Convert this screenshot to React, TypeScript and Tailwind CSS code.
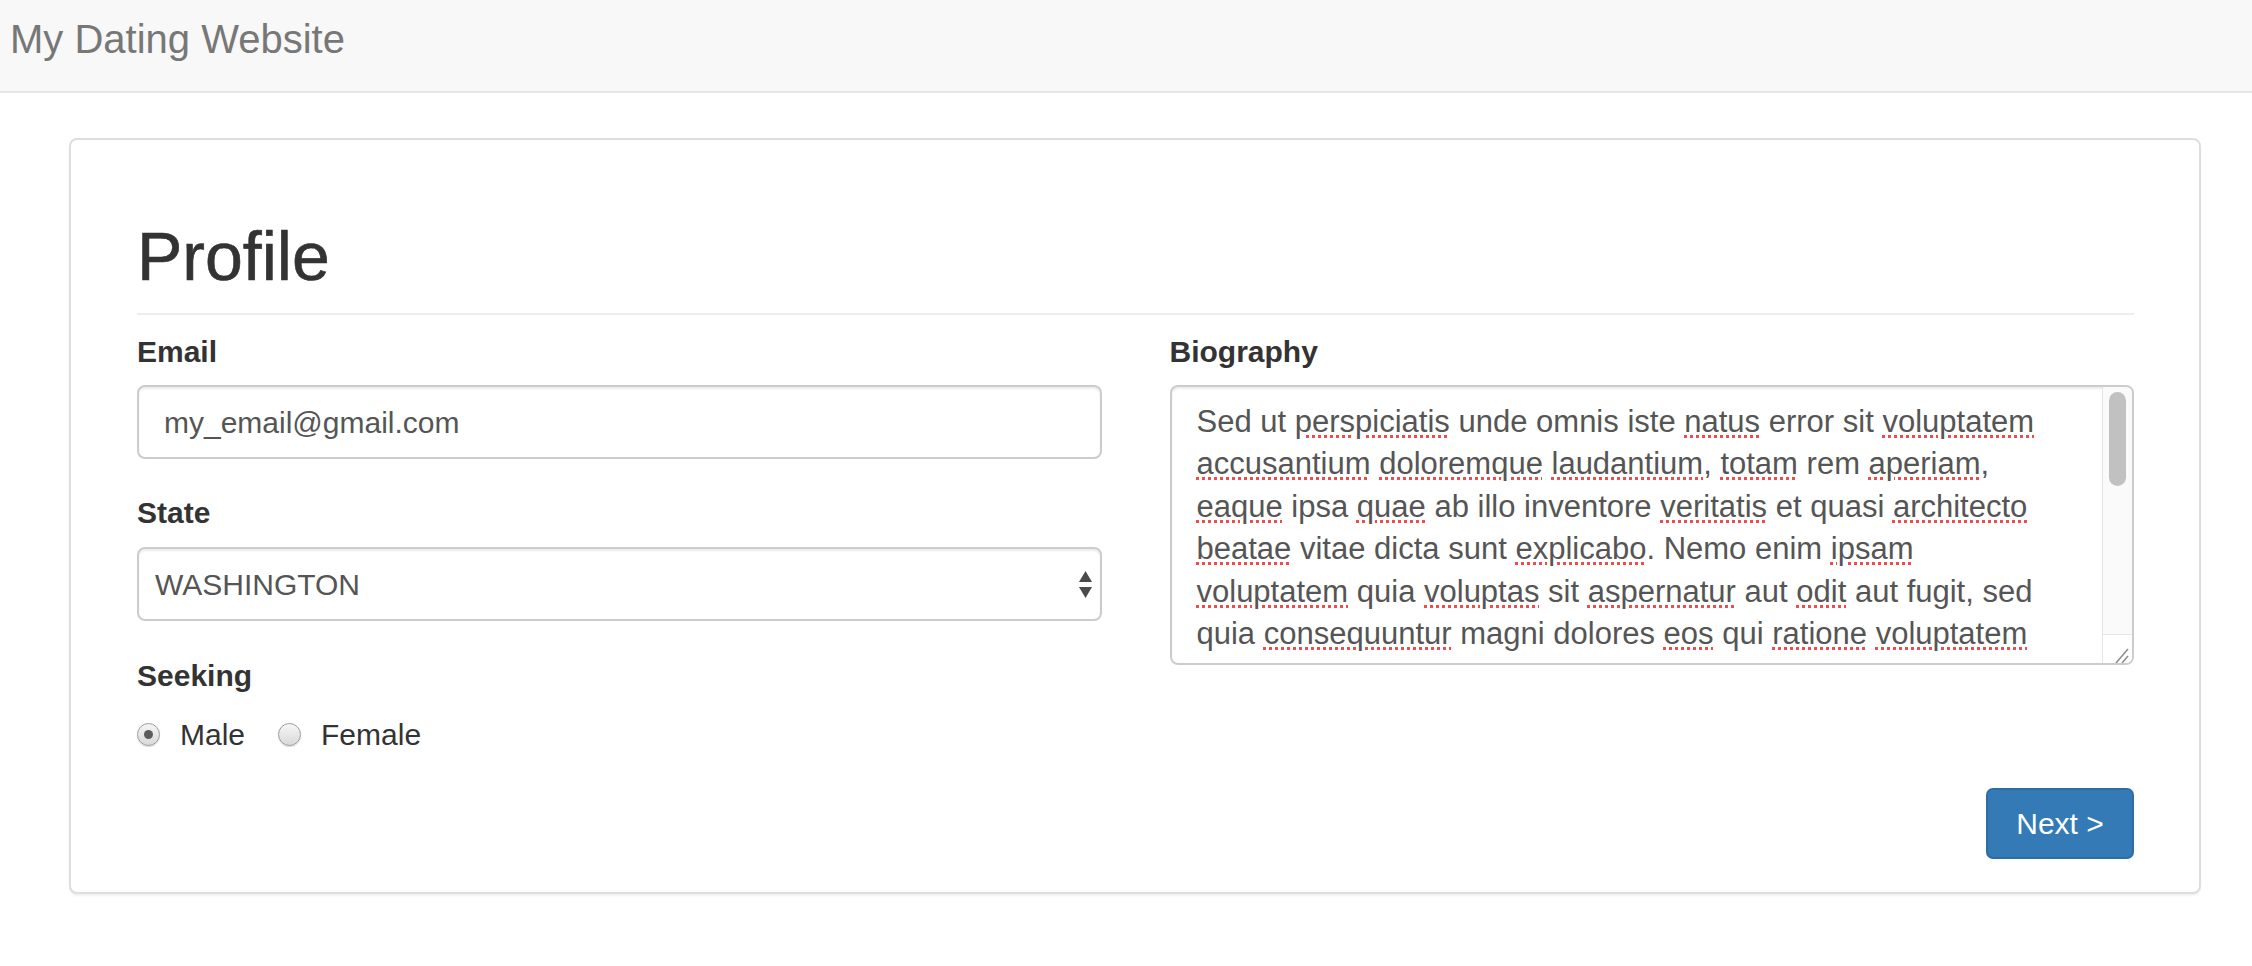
import React from "react";

const bio: string[] = [
  "Sed ut *perspiciatis* unde omnis iste *natus* error sit *voluptatem*",
  "*accusantium* *doloremque* *laudantium*, *totam* rem *aperiam*,",
  "*eaque* ipsa *quae* ab illo inventore *veritatis* et quasi *architecto*",
  "*beatae* vitae dicta sunt *explicabo*. Nemo enim *ipsam*",
  "*voluptatem* quia *voluptas* sit *aspernatur* aut *odit* aut fugit, sed",
  "quia *consequuntur* magni dolores *eos* qui *ratione* *voluptatem*",
  "sequi *nesciunt*. Neque porro *quisquam* est, qui *dolorem* ipsum quia",
];

function BioLine({ text }: { text: string }) {
  const parts = text.split(" ");
  return (
    <div className="whitespace-nowrap">
      {parts.map((p, i) => {
        const m = p.match(/^\*(.+)\*(.*)$/);
        return (
          <span key={i}>
            {i > 0 && " "}
            {m ? (
              <>
                <span className="underline decoration-dotted decoration-[#f24b4b] decoration-3 underline-offset-[3px]">{m[1]}</span>
                {m[2]}
              </>
            ) : (
              p
            )}
          </span>
        );
      })}
    </div>
  );
}

function Radio({ checked, label }: { checked?: boolean; label: string }) {
  return (
    <div className="flex items-center">
      <div className="w-[23px] h-[23px] rounded-full border border-[#9c9c9c] bg-linear-to-b from-[#f6f6f6] to-[#d9d9d9] shadow-[0_1px_1px_rgba(0,0,0,0.15)] flex items-center justify-center">
        {checked && <div className="w-[9px] h-[9px] rounded-full bg-[#5c5c5c]" />}
      </div>
      <span className="ml-[20px]">{label}</span>
    </div>
  );
}

const labelCls = "block text-[30px] font-bold leading-[42px] text-[#333]";
const fieldCls =
  "h-[74px] rounded-[8px] border-2 border-[#ccc] bg-white shadow-[inset_0_2px_2px_rgba(0,0,0,0.075)] flex items-center text-[30px] text-[#555]";

export default function App() {
  return (
    <div className="min-h-screen bg-white font-['Liberation_Sans',Arial,sans-serif]">
      {/* ── Navbar ── */}
      <nav className="h-[93px] border-b-2 border-[#e7e7e7] bg-[#f8f8f8] pl-[10px] pt-[19px]">
        <div className="text-[40px] leading-none text-[#777]">My Dating Website</div>
      </nav>

      <main className="pt-[45px]">
        <div className="ml-[69px] w-[2132px] rounded-[8px] border-2 border-[#ddd] bg-white shadow-[0_2px_2px_rgba(0,0,0,0.05)] pl-[66px] pr-[65px] pt-[80px] pb-[33px]">
          <h1 className="text-[68px] leading-[72px] font-normal text-[#333] [-webkit-text-stroke:0.6px_#333]">Profile</h1>
          <div className="mt-[21px] h-[2px] bg-[#eee]" />

          <div className="mt-[16px] grid grid-cols-2 gap-x-[68px]">
            {/* left column */}
            <div>
              <label className={labelCls}>Email</label>
              <div className={`${fieldCls} mt-[12px] pl-[25px]`}>my_email@gmail.com</div>

              <label className={`${labelCls} mt-[33px]`}>State</label>
              <div className={`${fieldCls} mt-[13px] pl-[16px] pr-[8px] justify-between`}>
                <span>WASHINGTON</span>
                <svg width="13" height="27" viewBox="0 0 13 27">
                  <path d="M6.5 0 L13 11 H0 Z" fill="#4a4a4a" />
                  <path d="M0 16 H13 L6.5 27 Z" fill="#4a4a4a" />
                </svg>
              </div>

              <label className={`${labelCls} mt-[34px]`}>Seeking</label>
              <div className="mt-[16px] h-[42px] flex items-center gap-[33px] text-[30px] text-[#333]">
                <Radio checked label="Male" />
                <Radio label="Female" />
              </div>
            </div>

            {/* right column */}
            <div>
              <label className={labelCls}>Biography</label>
              <div className="mt-[12px] h-[280px] rounded-[8px] border-2 border-[#ccc] bg-white shadow-[inset_0_2px_2px_rgba(0,0,0,0.075)] flex overflow-hidden">
                <div className="flex-1 overflow-hidden pl-[25px] pt-[14px] text-[31px] leading-[42.4px] text-[#555]">
                  {bio.map((l, i) => (
                    <BioLine key={i} text={l} />
                  ))}
                </div>
                <div className="w-[30px] flex flex-col border-l border-[#e6e6e6] bg-[#fafafa]">
                  <div className="flex-1 pl-[6px] pr-[6px] pt-[5px]">
                    <div className="h-[94px] rounded-full bg-[#c1c1c1]" />
                  </div>
                  <div className="h-[29px] border-t border-[#e6e6e6] bg-white">
                    <svg width="29" height="28" viewBox="0 0 29 28">
                      <path d="M13 28 L25 14" stroke="#8a8a8a" strokeWidth="1.5" />
                      <path d="M19 28 L25 21" stroke="#8a8a8a" strokeWidth="1.5" />
                    </svg>
                  </div>
                </div>
              </div>
            </div>
          </div>

          <div className="mt-[33px] flex justify-end">
            <button className="w-[148px] h-[71px] rounded-[7px] border-2 border-[#2e6da4] bg-[#337ab7] text-[30px] text-white">
              Next &gt;
            </button>
          </div>
        </div>
      </main>
    </div>
  );
}
